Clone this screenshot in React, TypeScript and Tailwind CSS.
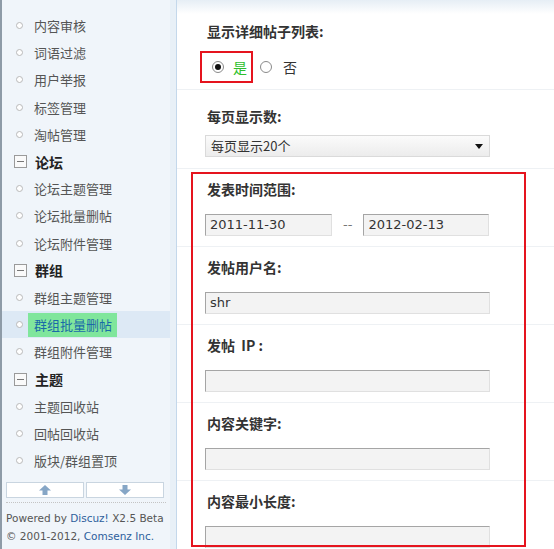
import React from 'react';

const CJK = '"Noto Sans CJK SC", "Noto Sans", sans-serif';
const LATIN = '"DejaVu Sans", "Noto Sans CJK SC", sans-serif';

type NavRow = { label: string; header?: boolean; active?: boolean };

const NAV: NavRow[] = [
  { label: '内容审核' },
  { label: '词语过滤' },
  { label: '用户举报' },
  { label: '标签管理' },
  { label: '淘帖管理' },
  { label: '论坛', header: true },
  { label: '论坛主题管理' },
  { label: '论坛批量删帖' },
  { label: '论坛附件管理' },
  { label: '群组', header: true },
  { label: '群组主题管理' },
  { label: '群组批量删帖', active: true },
  { label: '群组附件管理' },
  { label: '主题', header: true },
  { label: '主题回收站' },
  { label: '回帖回收站' },
  { label: '版块/群组置顶' },
];

function Arrow({ down }: { down?: boolean }) {
  return (
    <svg width="12" height="10" viewBox="0 0 12 10" className={down ? 'rotate-180' : ''}>
      <path d="M6 0 L12 5.5 H8.5 V10 H3.5 V5.5 H0 Z" fill="#86a6c6" />
    </svg>
  );
}

function Sidebar() {
  return (
    <aside className="w-[177px] shrink-0 border-l-2 border-[#8e9ba7] border-r border-r-[#c4d8eb] bg-[#e8f0f7] flex">
      <div className="w-[168px] bg-[#f0f5fa] flex flex-col pt-[12px]" style={{ fontFamily: CJK }}>
        {NAV.map((row) => (
          <div
            key={row.label}
            className={'h-[27.2px] flex items-center ' + (row.active ? 'bg-[#dde9f5]' : '')}
          >
            {row.header ? (
              <>
                <span className="ml-[12px] w-[13px] h-[13px] border border-[#9a9a9a] bg-[#fafafa] flex items-center justify-center">
                  <span className="w-[7px] h-px bg-[#777]" />
                </span>
                <span className="ml-[8px] text-[14px] font-bold text-[#222] leading-none">{row.label}</span>
              </>
            ) : (
              <>
                <span className="ml-[14px] w-[7px] h-[7px] rounded-full border border-[#b9b9b9] bg-white" />
                {row.active ? (
                  <span className="ml-[5px] pl-[6px] pr-[5px] h-[24px] flex items-center bg-[#80e69c] text-[13px] text-[#1a6aa8] leading-none">
                    {row.label}
                  </span>
                ) : (
                  <span className="ml-[11px] text-[13px] text-[#555] leading-none">{row.label}</span>
                )}
              </>
            )}
          </div>
        ))}
        <div className="mt-[8px] mx-[4px] flex gap-[2px]">
          <button className="w-[78px] h-[16px] border border-[#c9d5e0] bg-white flex items-center justify-center">
            <Arrow />
          </button>
          <button className="w-[78px] h-[16px] border border-[#c9d5e0] bg-white flex items-center justify-center">
            <Arrow down />
          </button>
        </div>
        <div className="mx-[4px] mt-[4px] border-t border-dotted border-[#c4c4c4]" />
        <div className="px-[4px] pt-[6px] text-[10.5px] leading-[18px] text-[#555]" style={{ fontFamily: LATIN }}>
          <p>
            Powered by <span className="text-[#2d5e9c]">Discuz!</span> X2.5 Beta
          </p>
          <p>
            © 2001-2012, <span className="text-[#2d5e9c]">Comsenz Inc.</span>
          </p>
        </div>
      </div>
    </aside>
  );
}

function Label({ children }: { children: React.ReactNode }) {
  return (
    <div className="pl-[2px] h-[20px] leading-[20px] text-[14px] font-bold text-[#333] whitespace-pre" style={{ fontFamily: CJK }}>
      {children}
    </div>
  );
}

function TextBox({ value, w = 'w-[285px]' }: { value?: string; w?: string }) {
  return (
    <div
      className={w + ' h-[22px] border border-t-[#a5a5a5] border-l-[#a5a5a5] border-r-[#e0e0e0] border-b-[#e0e0e0] bg-[#f3f3f3] flex items-center px-[4px] text-[13px] text-[#333]'}
      style={{ fontFamily: LATIN }}
    >
      {value}
    </div>
  );
}

function Radio({ checked }: { checked?: boolean }) {
  return (
    <span className="w-[12px] h-[12px] rounded-full border border-[#8a8a8a] bg-white flex items-center justify-center">
      {checked && <span className="w-[6px] h-[6px] rounded-full bg-[#111]" />}
    </span>
  );
}

function Section({ label, children }: { label: string; children: React.ReactNode }) {
  return (
    <div className="pl-[28px] pt-[10px] pb-[10px] border-b border-[#eef1f4]">
      <Label>{label}</Label>
      <div className="mt-[15px]">{children}</div>
    </div>
  );
}

export default function App() {
  return (
    <div className="w-[554px] h-[549px] overflow-hidden flex bg-white">
      <Sidebar />
      <main className="relative flex-1 bg-[linear-gradient(to_bottom,#e6eef5,#ffffff_14px)]">
        <div className="pl-[28px] pt-[21px] pb-[6px] border-b border-[#eef1f4]">
          <Label>显示详细帖子列表:</Label>
          <div className="mt-[10px] -ml-[5px] flex items-center" style={{ fontFamily: CJK }}>
            <div className="w-[53px] h-[32px] border-2 border-[#e5141e] flex items-center pl-[10px]">
              <Radio checked />
              <span className="ml-[9px] text-[14px] text-[#2cbf2c]">是</span>
            </div>
            <span className="ml-[7px]">
              <Radio />
            </span>
            <span className="ml-[11px] text-[14px] text-[#333]">否</span>
          </div>
        </div>

        <div className="pl-[28px] pt-[16px] pb-[11px] border-b border-[#eef1f4]">
          <Label>每页显示数:</Label>
          <div
            className="mt-[9px] w-[285px] h-[22px] border border-[#dadada] bg-[linear-gradient(to_bottom,#fbfbfb,#ececec)] flex items-center justify-between pl-[5px] pr-[6px] text-[13px] text-[#333]"
            style={{ fontFamily: CJK }}
          >
            <span>每页显示20个</span>
            <svg width="8" height="5" viewBox="0 0 8 5">
              <path d="M0 0 H8 L4 5 Z" fill="#111" />
            </svg>
          </div>
        </div>

        <Section label="发表时间范围:">
          <div className="flex items-center">
            <TextBox value="2011-11-30" w="w-[127px]" />
            <span className="mx-[11px] text-[13px] text-[#777]" style={{ fontFamily: LATIN }}>--</span>
            <TextBox value="2012-02-13" w="w-[126px]" />
          </div>
        </Section>
        <Section label="发帖用户名:">
          <TextBox value="shr" />
        </Section>
        <Section label="发帖  IP :">
          <TextBox />
        </Section>
        <Section label="内容关键字:">
          <TextBox />
        </Section>
        <Section label="内容最小长度:">
          <TextBox />
        </Section>

        <div className="absolute left-[14px] top-[172px] w-[335px] h-[375px] border-2 border-[#e5141e] pointer-events-none" />
      </main>
    </div>
  );
}
